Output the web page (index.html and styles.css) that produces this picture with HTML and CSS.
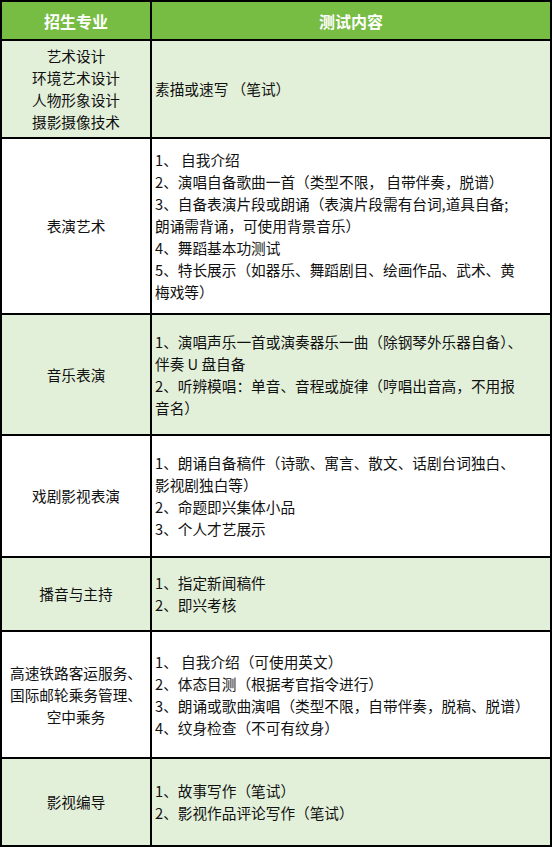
FILE: index.html
```html
<!DOCTYPE html>
<html lang="zh-CN">
<head>
<meta charset="utf-8">
<title>招生专业与测试内容</title>
<link rel="stylesheet" href="styles.css">
</head>
<body>
<div class="table">
  <div class="cell head">招生专业</div>
  <div class="cell head">测试内容</div>

  <div class="cell major green">
    <div>艺术设计</div>
    <div>环境艺术设计</div>
    <div>人物形象设计</div>
    <div>摄影摄像技术</div>
  </div>
  <div class="cell content green">
    <div>素描或速写 （笔试）</div>
  </div>

  <div class="cell major">
    <div>表演艺术</div>
  </div>
  <div class="cell content">
    <div>1、 自我介绍</div>
    <div>2、演唱自备歌曲一首（类型不限， 自带伴奏，脱谱）</div>
    <div>3、自备表演片段或朗诵（表演片段需有台词,道具自备;</div>
    <div>朗诵需背诵，可使用背景音乐）</div>
    <div>4、舞蹈基本功测试</div>
    <div>5、特长展示（如器乐、舞蹈剧目、绘画作品、武术、黄</div>
    <div>梅戏等）</div>
  </div>

  <div class="cell major green">
    <div>音乐表演</div>
  </div>
  <div class="cell content green">
    <div>1、演唱声乐一首或演奏器乐一曲（除钢琴外乐器自备）、</div>
    <div>伴奏 U 盘自备</div>
    <div>2、听辨模唱：单音、音程或旋律（哼唱出音高，不用报</div>
    <div>音名）</div>
  </div>

  <div class="cell major">
    <div>戏剧影视表演</div>
  </div>
  <div class="cell content">
    <div>1、朗诵自备稿件（诗歌、寓言、散文、话剧台词独白、</div>
    <div>影视剧独白等）</div>
    <div>2、命题即兴集体小品</div>
    <div>3、个人才艺展示</div>
  </div>

  <div class="cell major green">
    <div>播音与主持</div>
  </div>
  <div class="cell content green">
    <div>1、指定新闻稿件</div>
    <div>2、即兴考核</div>
  </div>

  <div class="cell major">
    <div>高速铁路客运服务、</div>
    <div>国际邮轮乘务管理、</div>
    <div>空中乘务</div>
  </div>
  <div class="cell content">
    <div>1、 自我介绍（可使用英文）</div>
    <div>2、体态目测（根据考官指令进行）</div>
    <div>3、朗诵或歌曲演唱（类型不限，自带伴奏，脱稿、脱谱）</div>
    <div>4、纹身检查（不可有纹身）</div>
  </div>

  <div class="cell major green">
    <div>影视编导</div>
  </div>
  <div class="cell content green">
    <div>1、故事写作（笔试）</div>
    <div>2、影视作品评论写作（笔试）</div>
  </div>
</div>
</body>
</html>
```

FILE: styles.css
```css
html, body {
  margin: 0;
  padding: 0;
  background: #ffffff;
}

body {
  font-family: "Noto Sans CJK SC", "Microsoft YaHei", sans-serif;
  font-size: 14.67px;
  line-height: 22px;
  color: #111111;
}

.table {
  width: 552px;
  box-sizing: border-box;
  border-top: 2px solid #000;
  border-left: 2px solid #000;
  display: grid;
  grid-template-columns: 150px 400px;
  grid-template-rows: 39px 98px 176px 121px 122px 74px 127px 88px;
}

.cell {
  box-sizing: border-box;
  border-right: 2px solid #000;
  border-bottom: 2px solid #000;
  display: flex;
  flex-direction: column;
  justify-content: center;
  white-space: nowrap;
}

.head {
  background: #77bc43;
  color: #ffffff;
  font-weight: bold;
  font-size: 16px;
  align-items: center;
  text-align: center;
}

.green {
  background: #e3f0d9;
}

.major {
  align-items: center;
  text-align: center;
}

.content {
  padding-left: 3px;
  align-items: flex-start;
}
```
